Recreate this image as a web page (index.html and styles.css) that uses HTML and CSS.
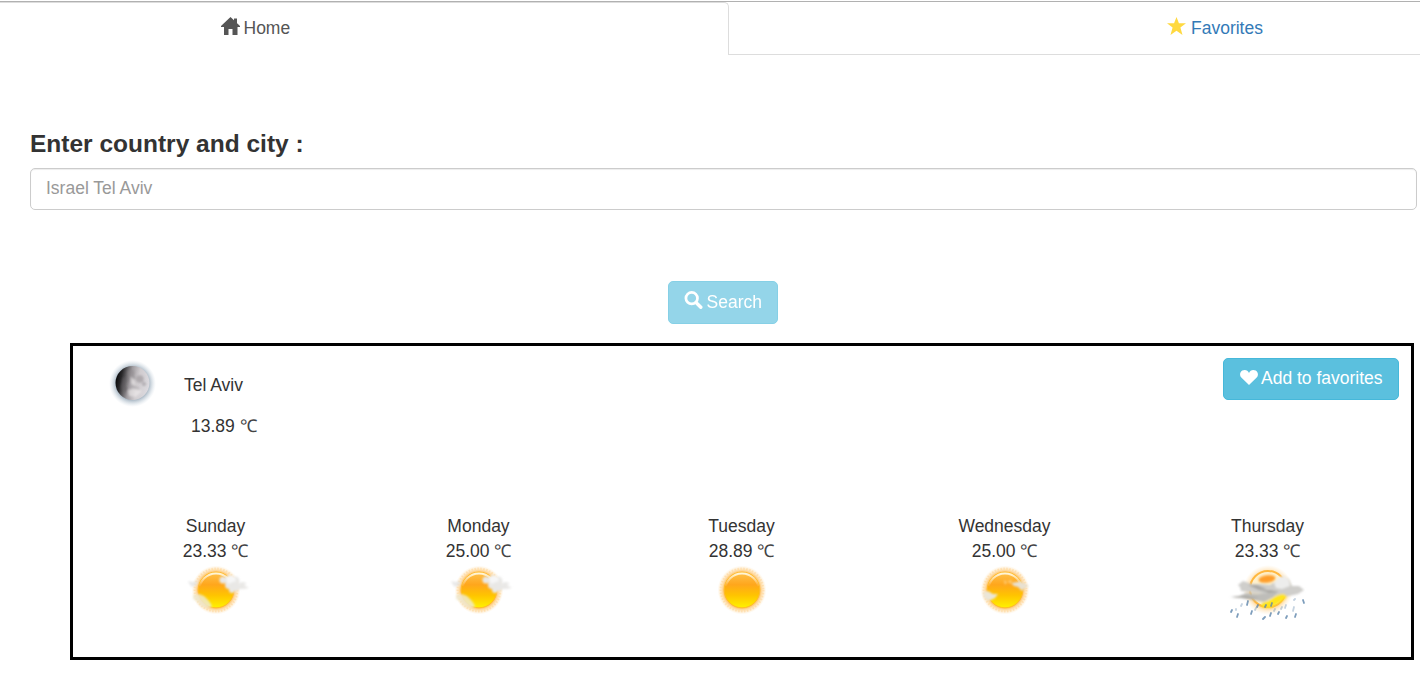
FILE: index.html
```html
<!DOCTYPE html>
<html lang="en">
<head>
<meta charset="utf-8">
<title>Weather</title>
<link rel="stylesheet" href="styles.css">
</head>
<body>
<svg class="defs" width="0" height="0" aria-hidden="true">
  <defs>
    <radialGradient id="halo"><stop offset=".7" stop-color="#ff9d0a" stop-opacity=".8"/><stop offset=".84" stop-color="#ffbd55" stop-opacity=".4"/><stop offset="1" stop-color="#ffd38a" stop-opacity="0"/></radialGradient>
    <linearGradient id="disc" x1="0" y1="0" x2="0" y2="1"><stop offset="0" stop-color="#ffc34d"/><stop offset=".35" stop-color="#ffa61c"/><stop offset=".65" stop-color="#ffc400"/><stop offset="1" stop-color="#fff200"/></linearGradient>
    <linearGradient id="shine" x1="0" y1="0" x2="0" y2="1"><stop offset="0" stop-color="#fffbe8" stop-opacity=".9"/><stop offset=".4" stop-color="#fff" stop-opacity="0"/></linearGradient>
    <linearGradient id="moonshade" x1="0" y1=".4" x2="1" y2=".6"><stop offset="0" stop-color="#080808"/><stop offset=".15" stop-color="#29282a"/><stop offset=".42" stop-color="#a09ca0"/><stop offset=".65" stop-color="#d0cccf"/><stop offset="1" stop-color="#dddbe0"/></linearGradient>
    <radialGradient id="moonglow"><stop offset=".7" stop-color="#7c92a5" stop-opacity=".65"/><stop offset="1" stop-color="#c5d3df" stop-opacity="0"/></radialGradient>
    <filter id="soft" x="-20%" y="-20%" width="140%" height="140%"><feGaussianBlur stdDeviation=".8"/></filter>
    <g id="sun">
      <circle cx="40" cy="27" r="24.500" fill="url(#halo)"/>
      <circle cx="40" cy="27" r="21.500" fill="none" stroke="#ffb13c" stroke-opacity=".2" stroke-width="2" stroke-dasharray="1.500 1.500"/>
      <circle cx="40" cy="27" r="17.800" fill="url(#disc)" stroke="#ffbd29" stroke-width="1"/>
      <circle cx="40" cy="27" r="16.600" fill="none" stroke="url(#shine)" stroke-width="2"/>
    </g>
    <g id="wisps" filter="url(#soft)">
      <g fill="#e9e8e6"><circle cx="47" cy="17" r="3.500"/><circle cx="54" cy="17" r="5"/><circle cx="59" cy="18" r="4.500"/><circle cx="60" cy="24" r="4"/><circle cx="53" cy="22" r="4"/><circle cx="56" cy="27" r="3"/><path d="M60 22l6-3 5 1-3 2 5 3-6 1-7 0zM43 16l5 0 0 4z"/></g>
      <path d="M50 15q4-4 9-1l1 4-8 3z" fill="#f6f6f6"/>
      <path d="M12 18l5 1 5-2-1 5-5 2-2-2z" fill="#e3e3e3" opacity=".8"/>
      <path d="M17 32l6-1 5 2 4 4 3 4 1 3-5 1-6-2-4-5-4-2z" fill="#efe9cf" opacity=".85"/>
    </g>
  </defs>
</svg>

<nav class="tabs">
  <a class="tab tab-active" href="#"><svg class="glyph house" viewBox="0 0 19 18"><path d="M9.500 0 19 9v1h-2.500v8h-5v-6h-4v6H3v-8H0V9zM13 1.500h3V8h-3z" fill="currentColor"/></svg><span>Home</span></a>
  <a class="tab tab-link" href="#"><svg class="glyph star" viewBox="0 0 18 17"><path d="M9 0l2.300 6H18l-5.300 4 2 7L9 12.900 3.300 17l2-7L0 6h6.700z" fill="#ffd940"/></svg><span>Favorites</span></a>
</nav>

<main class="page">
  <label class="label" for="place">Enter country and city :</label>
  <input class="field" id="place" type="text" placeholder="Israel Tel Aviv">
  <button class="btn btn-search" type="button"><svg class="glyph" viewBox="0 0 19 19"><circle cx="7.600" cy="7.600" r="6.100" fill="none" stroke="currentColor" stroke-width="2.900"/><path d="M12.400 12.400l4.800 4.800" stroke="currentColor" stroke-width="3.600" stroke-linecap="round"/></svg><span>Search</span></button>

  <section class="card">
    <header class="current">
      <svg class="moon" width="56" height="56" viewBox="0 0 56 56">
        <circle cx="28.500" cy="28.500" r="23.500" fill="url(#moonglow)"/>
        <circle cx="28.500" cy="28" r="17" fill="url(#moonshade)"/>
        <g filter="url(#soft)"><g fill="#8d888c" opacity=".5"><circle cx="27" cy="18" r="3.500"/><circle cx="36" cy="24" r="3.800"/><circle cx="29" cy="23" r="2"/><circle cx="40" cy="29" r="2"/></g><path d="M19 22l4 3-2 5 3 4-3 4-4-6z" fill="#646064" opacity=".5"/><path d="M27 22l4 3 1 6-5-2zM24 35l8-2 6 3-6 6-7-1z" fill="#f1eeee" opacity=".6"/><path d="M27 30l7 2 2 3-6-1z" fill="#aaa6aa" opacity=".6"/></g>
      </svg>
      <div class="reading"><div class="city">Tel Aviv</div><div class="temp now">13.89 <span class="unit">℃</span></div></div>
      <button class="btn btn-add" type="button"><svg class="glyph heart" viewBox="0 0 18 15"><path d="M9 15 1.300 7.600C-.7 5.500-.2 2 2.300.6 5-.7 8 .3 9 3c1-2.700 4-3.700 6.700-2.400 2.500 1.400 3 4.900 1 7z" fill="currentColor"/></svg><span>Add to favorites</span></button>
    </header>

    <div class="forecast">
      <div class="day"><div>Sunday</div><div class="temp">23.33 <span class="unit">℃</span></div>
        <svg class="sky" viewBox="0 0 80 60"><use href="#sun"/><use href="#wisps"/></svg></div>
      <div class="day"><div>Monday</div><div class="temp">25.00 <span class="unit">℃</span></div>
        <svg class="sky" viewBox="0 0 80 60"><use href="#sun"/><use href="#wisps"/></svg></div>
      <div class="day"><div>Tuesday</div><div class="temp">28.89 <span class="unit">℃</span></div>
        <svg class="sky" viewBox="0 0 80 60"><use href="#sun"/></svg></div>
      <div class="day"><div>Wednesday</div><div class="temp">25.00 <span class="unit">℃</span></div>
        <svg class="sky" viewBox="0 0 80 60"><use href="#sun"/><g filter="url(#soft)"><path d="M46 20l6-1 3-1 4 2 5 3-4 2-3 3-4-4-4-1z" fill="#e8e1d2"/><path d="M18 29l5-1 5 3 5 0-3 4-6 3-5-3z" fill="#ebe6d8"/><path d="M39 17l3 2-2 3zM43 18l4-1-2 4z" fill="#ffe0a5" opacity=".7"/></g></svg></div>
      <div class="day"><div>Thursday</div><div class="temp">23.33 <span class="unit">℃</span></div>
        <svg class="sky" viewBox="0 0 80 60">
          <circle cx="40" cy="27" r="25" fill="url(#halo)" opacity=".6"/>
          <circle cx="40" cy="26" r="18" fill="#fff1cd" stroke="#ffb73e" stroke-width="2"/>
          <ellipse cx="39" cy="16" rx="8.500" ry="3.800" fill="#ff9e29" transform="rotate(-8 39 16)" filter="url(#soft)"/>
          <g filter="url(#soft)">
            <path d="M10 22l5-4 9 3 9 0 9 1 6-4 6-5 7 3 3 7 7 0 5 4-6 4-14 3-14-2-14-2-15-2-1-4z" fill="#cfcecb"/>
            <path d="M2 34l9-1 7-3 14 1 9-1 9-2-4 6-10 5-10-2-12-2z" fill="#bebdb9"/>
            <path d="M46 20l5-6 6-1 4 4 1 6-8 3-6-1z" fill="#ededec"/>
            <path d="M20 22l9 0 10 4-8 1zM31 27l12 0 8 2-10 1zM4 34l14-1 13 2-10 1z" fill="#aaa9a5"/>
            <path d="M34 40q6-1 11-5t11-4l3 3-8 6-9 5-9-1z" fill="#ffe51a"/>
          </g>
          <g stroke="#5f86ac" stroke-width="1.800" stroke-linecap="round" opacity=".8"><path d="M4 47l-1 2M10 51l-1 3M20 38l-1 4M24 48l-1 3M30 42l-1 2M37 54l-2 2M38 42l-1 2M44 40l-1 3M43 50l-1 3M51 49l-1 2M59 53l-1 2M68 51l-1 3M75 37l1 3"/><path d="M14 41l-1 2M28 45l-1 2M58 42l-1 3M66 44l-1 4M67 36l-1 1M54 44l-1 2M8 46l0 1M47 46l-1 2" opacity=".45"/></g>
        </svg></div>
    </div>
  </section>
</main>
</body>
</html>
```
FILE: styles.css
```css
* { box-sizing: border-box; }
body {
  margin: 0;
  height: 688px;
  overflow: hidden;
  background: #fff;
  color: #333;
  font: 17.5px/25px "Liberation Sans", Arial, sans-serif;
}
.defs { display: block; position: absolute; }
.tabs { display: flex; border-top: 1px solid #b1b1b1; margin-top: 1px; height: 54px; }
.tab { display: flex; align-items: flex-start; gap: 4px; padding-top: 14px; text-decoration: none; }
.tab-active { width: 729px; padding-left: 221px; color: #555; border: solid #ddd; border-width: 1px 1px 0 0; border-radius: 0 5px 0 0; padding-top: 13px; }
.tab-link { flex: 1; padding-left: 438px; color: #337ab7; border-bottom: 1px solid #ddd; gap: 5px; }
.glyph { width: 19px; height: 18px; flex: none; margin-top: 2px; }
.house { margin-top: 1px; margin-right: -.5px; }
.star { width: 19px; height: 18px; margin-top: 1px; }
.page { display: flex; flex-direction: column; padding: 74px 3px 0 30px; }
.label { font-size: 24.5px; line-height: 30px; font-weight: 700; }
.field { height: 42px; margin-top: 9px; padding: 0 15px 1px; border: 1px solid #ccc; border-radius: 5px; box-shadow: inset 0 1px 1px rgba(0,0,0,.075); font: inherit; }
.field::placeholder { color: #999; opacity: 1; }
.btn { display: flex; align-items: flex-start; gap: 4px; border: 1px solid #46b8da; border-radius: 5px; background: #5bc0de; color: #fff; font: inherit; padding: 7px 15px 0; white-space: nowrap; }
.btn-search { align-self: center; width: 110px; height: 43px; margin-top: 71px; margin-right: 2px; opacity: .65; }
.btn-search span { margin-top: 1px; }
.card { width: 1344px; height: 317px; margin: 19px 0 0 40px; border: 3px solid #000; }
.current { display: flex; height: 154px; align-items: flex-start; }
.moon { margin: 9px 0 0 31px; }
.reading { margin: 27px 0 0 24px; }
.now { margin: 16px 0 0 7px; }
.btn-add { width: 176px; height: 42px; margin: 12px 12px 0 auto; padding-left: 16px; gap: 3px; }
.btn-add .heart { width: 18px; height: 15px; margin-top: 4px; }
.forecast { display: grid; grid-template-columns: repeat(5, 263px); padding: 14px 0 0 11px; }
.day { display: flex; flex-direction: column; align-items: center; }
.sky { width: 80px; height: 60px; margin-top: -1px; }
.temp { white-space: nowrap; }
.unit { font-family: "Liberation Serif", serif; line-height: 1; color: #444; }
```
